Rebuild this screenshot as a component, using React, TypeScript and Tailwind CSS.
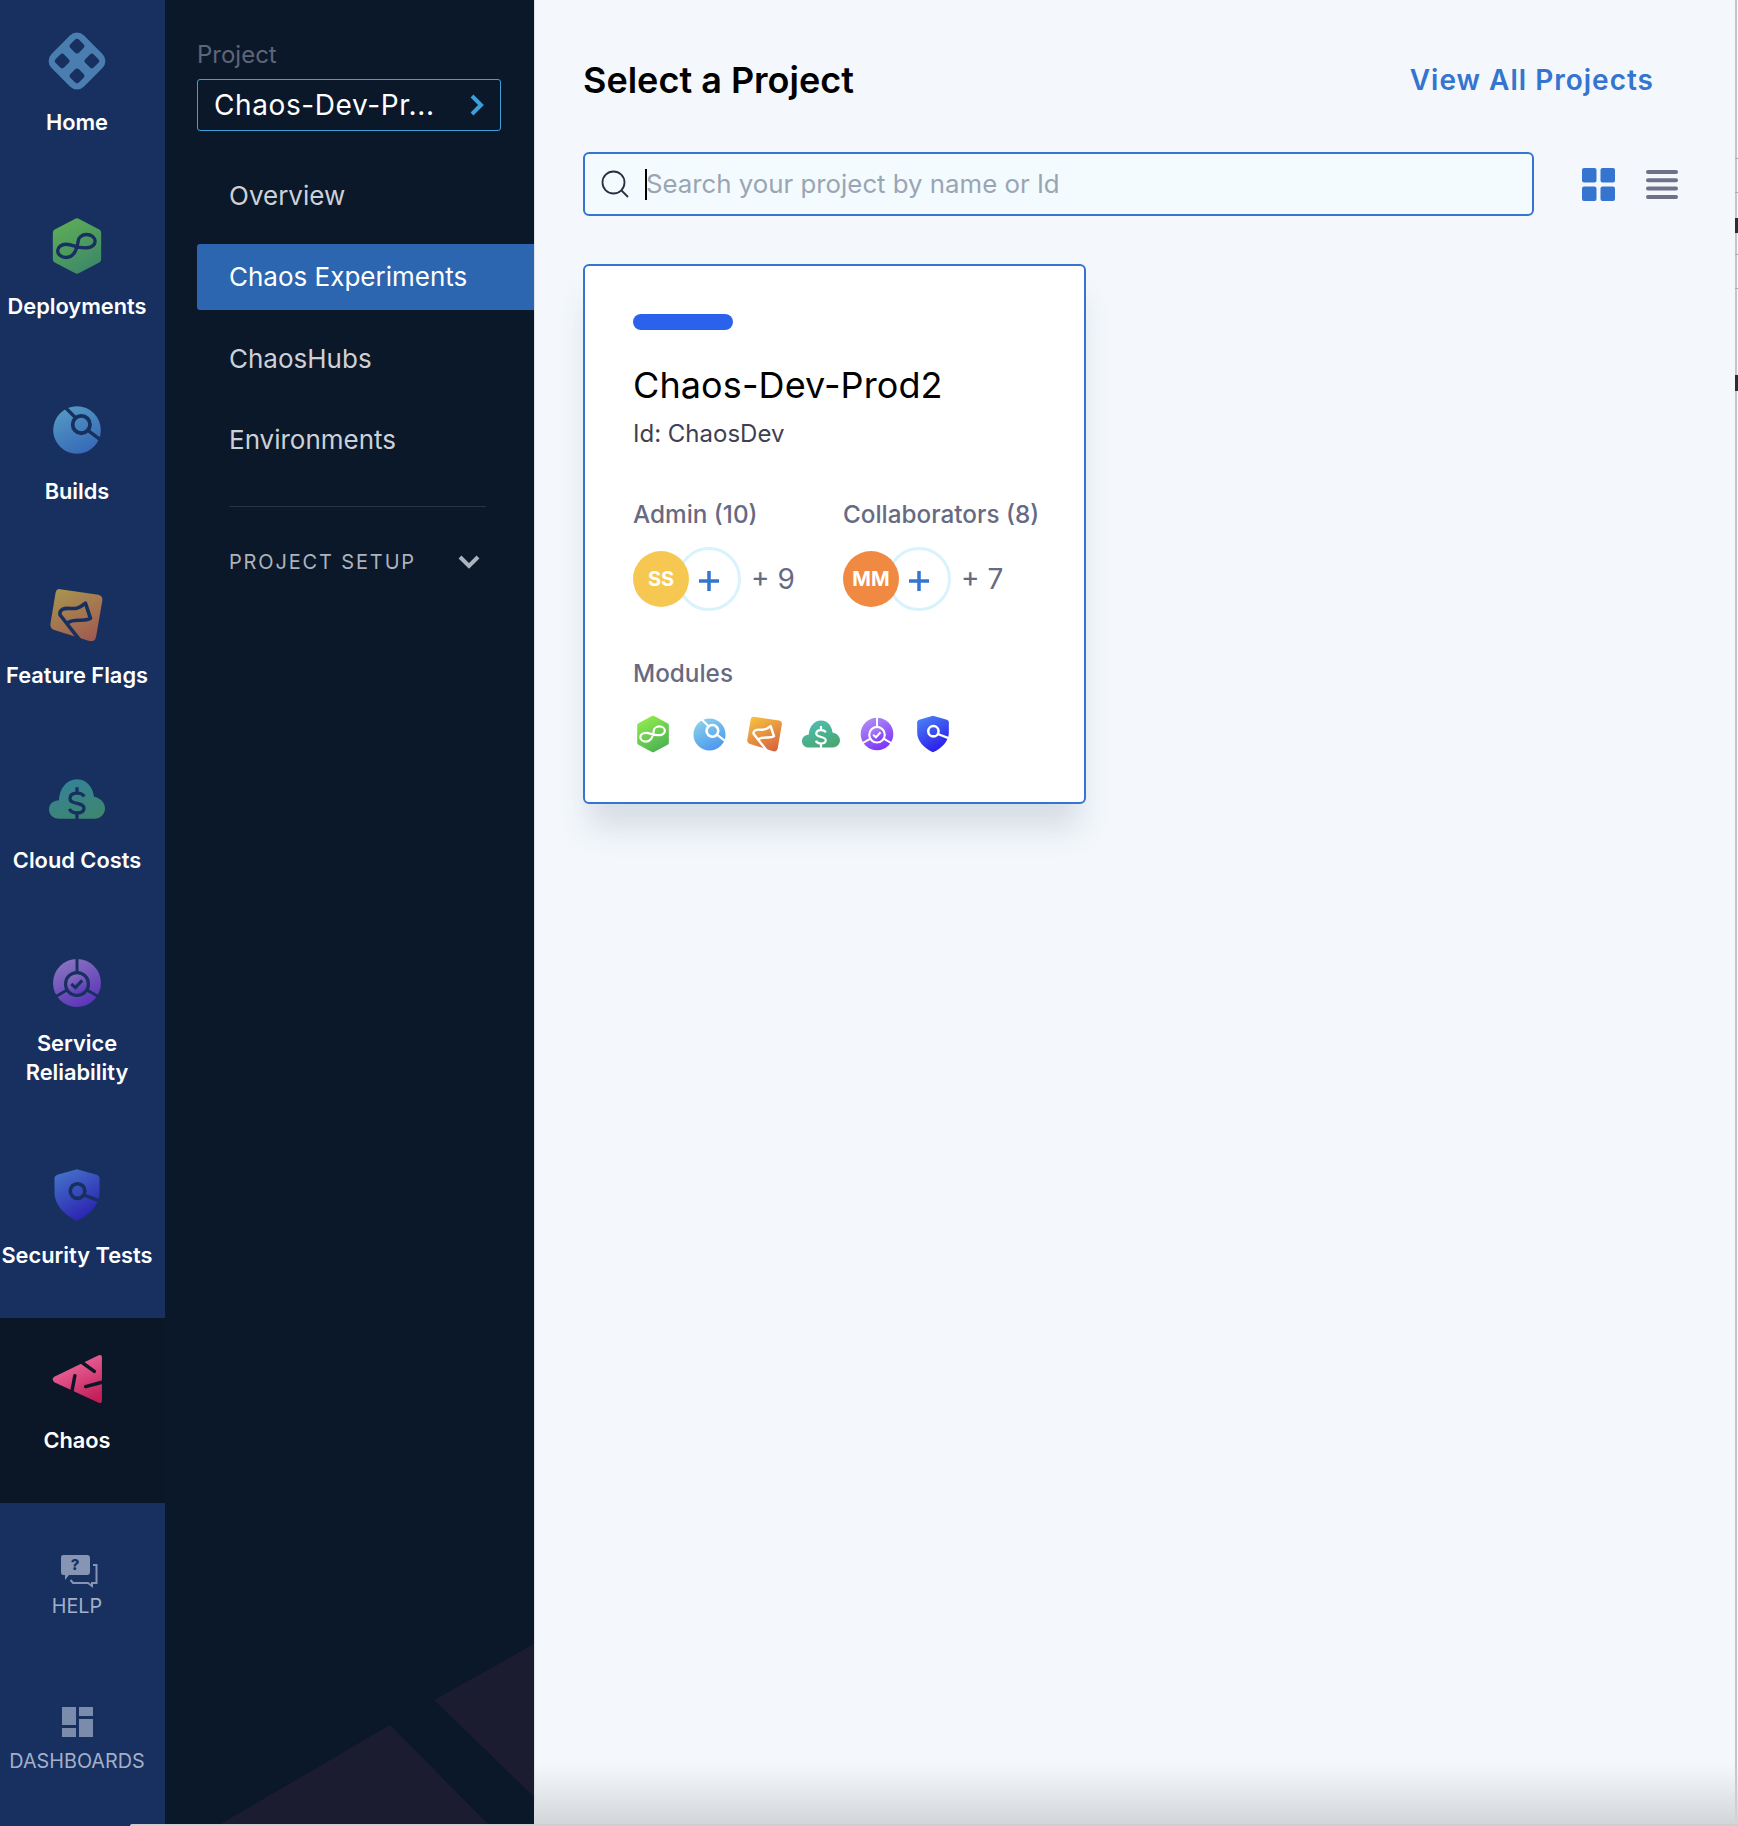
import { ReactNode } from "react";

interface IIcon {
  size: number;
  from: string;
  to: string;
  cut: string;
  id: string;
}

function Gradient({ id, from, to }: { id: string; from: string; to: string }) {
  return (
    <defs>
      <linearGradient id={id} x1="0.2" y1="0" x2="0.7" y2="1">
        <stop offset="0%" stopColor={from} />
        <stop offset="100%" stopColor={to} />
      </linearGradient>
    </defs>
  );
}

function DeployIcon({ size, from, to, cut, id }: IIcon) {
  return (
    <svg width={size} height={size} viewBox="0 0 48 48">
      <Gradient id={id} from={from} to={to} />
      <path
        d="M24 4 L41 13 V35 L24 44 L7 35 V13 Z"
        fill={`url(#${id})`}
        stroke={`url(#${id})`}
        strokeWidth="6"
        strokeLinejoin="round"
      />
      <path
        d="M15 22.500 C21 22.500 23 26 32 25.500 A7 5.500 0 1 0 25 20 C24.500 25 22 33.500 15 33.500 A7 5.500 0 1 1 15 22.500"
        fill="none"
        stroke={cut}
        strokeWidth="2.800"
        strokeLinejoin="round"
      />
    </svg>
  );
}

function BuildsIcon({ size, from, to, cut, id }: IIcon) {
  return (
    <svg width={size} height={size} viewBox="0 0 48 48">
      <Gradient id={id} from={from} to={to} />
      <circle cx="24" cy="24" r="22" fill={`url(#${id})`} />
      <path d="M13 3 L22 12 M35 25 L47 34" stroke={cut} strokeWidth="3" />
      <circle cx="28" cy="19" r="8" fill="none" stroke={cut} strokeWidth="3.500" />
    </svg>
  );
}

function FlagIcon({ size, from, to, cut, id }: IIcon) {
  return (
    <svg width={size} height={size} viewBox="0 0 48 48">
      <Gradient id={id} from={from} to={to} />
      <path
        d="M9 1 L43 6 Q47 7 46.500 11 L41 43 Q40 48 35 47 L3 37 Q-0.500 35 0.500 31 L5 4 Q6 0.500 9 1 Z"
        fill={`url(#${id})`}
      />
      <path
        d="M27 47 L9 24 Q8 21 11 19 C17 16 22 22 31.500 13.500 L36 27 C29 31 24 26 15 31"
        fill="none"
        stroke={cut}
        strokeWidth="3.200"
        strokeLinejoin="round"
      />
    </svg>
  );
}

function CloudIcon({ size, from, to, cut, id }: IIcon) {
  return (
    <svg width={size} height={size} viewBox="0 0 48 48">
      <Gradient id={id} from={from} to={to} />
      <path
        d="M9 41 C3 41 0 37 0 33 C0 28 4 25 8.500 25 C9 15 15 7 24 7 C33 7 38 15 38.500 22 C44 23 48 27 48 32 C48 37 44 41 39 41 Z"
        fill={`url(#${id})`}
      />
      <path
        d="M30 22 C29 19.500 27 19 24 19 C20.500 19 18 20.500 18 23.500 C18 29.500 30 26 30 32 C30 35 27.500 36 24 36 C20.500 36 18.500 35 17.500 32.500 M24 14 V19 M24 36 V42"
        fill="none"
        stroke={cut}
        strokeWidth="2.800"
      />
    </svg>
  );
}

function ServiceIcon({ size, from, to, cut, id }: IIcon) {
  return (
    <svg width={size} height={size} viewBox="0 0 48 48">
      <Gradient id={id} from={from} to={to} />
      <circle cx="24" cy="24" r="23" fill={`url(#${id})`} />
      <path d="M24 0 V13 M14 31 L2 38 M34 31 L46 38" stroke={cut} strokeWidth="2.800" />
      <circle cx="24" cy="25" r="11" fill={`url(#${id})`} stroke={cut} strokeWidth="3" />
      <path
        d="M18.500 25 L22.500 28.500 L29 21.500"
        fill="none"
        stroke={cut}
        strokeWidth="3"
      />
    </svg>
  );
}

function ShieldIcon({ size, from, to, cut, id }: IIcon) {
  return (
    <svg width={size} height={size} viewBox="0 0 48 48">
      <Gradient id={id} from={from} to={to} />
      <path
        d="M24 1 L41.500 6 Q44 7 44 9 V22 C44 33 35 42 24 47 C13 42 4 33 4 22 V9 Q4 7 6.500 6 Z"
        fill={`url(#${id})`}
      />
      <circle cx="24.500" cy="20.500" r="6.500" fill="none" stroke={cut} strokeWidth="3.200" />
      <path d="M30 24 L44.500 29.500" stroke={cut} strokeWidth="3" />
    </svg>
  );
}

function ChaosIcon({ size, from, to, cut, id }: IIcon) {
  return (
    <svg width={size} height={size} viewBox="0 0 48 48">
      <Gradient id={id} from={from} to={to} />
      <path
        d="M44 2 Q47 1 47 4 V44 Q47 47 44 46 L3 27 Q0 24 3 22 Z"
        fill={`url(#${id})`}
      />
      <path
        d="M29 9 L40 17 M47 27 L32 31 M22 21 L19 37"
        fill="none"
        stroke={cut}
        strokeWidth="3.200"
        strokeLinecap="round"
      />
    </svg>
  );
}

function HomeIcon() {
  return (
    <svg width="60" height="60" viewBox="0 0 60 60">
      <g transform="rotate(45 30 30)">
        <rect x="7" y="7" width="46" height="46" rx="10" fill="#4a7db0" />
        <rect x="13.500" y="13.500" width="12" height="12" rx="3" fill="#17305f" />
        <rect x="34.500" y="13.500" width="12" height="12" rx="3" fill="#17305f" />
        <rect x="13.500" y="34.500" width="12" height="12" rx="3" fill="#17305f" />
        <rect x="34.500" y="34.500" width="12" height="12" rx="3" fill="#17305f" />
      </g>
    </svg>
  );
}

function HelpIcon() {
  return (
    <svg width="38" height="34" viewBox="0 0 38 34">
      <path
        d="M3 1 H27 Q30 1 30 4 V18 Q30 21 27 21 H9 L5 26 V21 H3 Q1 21 1 18 V4 Q1 1 3 1 Z"
        fill="#8595b3"
      />
      <text
        x="15"
        y="16"
        textAnchor="middle"
        fontSize="15"
        fontWeight="800"
        fill="#17305f"
        fontFamily="Inter, sans-serif"
      >
        ?
      </text>
      <path
        d="M33 11 H36.500 V29 H32 V32 L28 29 H13 L10.500 26"
        fill="none"
        stroke="#8595b3"
        strokeWidth="2"
      />
    </svg>
  );
}

function DashIcon() {
  return (
    <svg width="32" height="32" viewBox="0 0 32 32">
      <rect x="1" y="1" width="14" height="18" fill="#7a8bab" />
      <rect x="18" y="1" width="14" height="9" fill="#7a8bab" />
      <rect x="1" y="22" width="14" height="9" fill="#7a8bab" />
      <rect x="18" y="13" width="14" height="18" fill="#7a8bab" />
    </svg>
  );
}

function RailItem({
  icon,
  label,
  active,
  tall,
}: {
  icon: ReactNode;
  label: ReactNode;
  active?: boolean;
  tall?: boolean;
}) {
  return (
    <div
      className={`flex flex-col items-center pr-[11px] ${
        tall ? "h-[211px] pt-[32px]" : "h-[184.500px] pt-[33px]"
      } ${active ? "bg-[#0b1626]" : ""}`}
    >
      <div className="h-[56px] flex items-center justify-center">{icon}</div>
      <div className="mt-[18.500px] text-center text-[21.800px] leading-[29px] font-semibold text-white">
        {label}
      </div>
    </div>
  );
}

function NavItem({ label, active }: { label: string; active?: boolean }) {
  return (
    <div
      className={`h-[66px] mb-[15.500px] pl-[32px] flex items-center text-[26px] rounded-l-[3px] ${
        active ? "bg-[#2c66b0] text-white" : "text-[#cdd0d6]"
      }`}
    >
      {label}
    </div>
  );
}

function People({
  title,
  initials,
  colour,
  more,
}: {
  title: string;
  initials: string;
  colour: string;
  more: string;
}) {
  return (
    <div className="flex flex-col">
      <div className="text-[24.300px] leading-[30px] font-medium text-[#666a82] whitespace-nowrap">
        {title}
      </div>
      <div className="flex items-center mt-[18px] h-[64px]">
        <div className="relative w-[108px] h-[64px]">
          <div className="absolute left-[44px] top-0 w-[64px] h-[64px] rounded-full border-[3px] border-[#d9f3fd] flex items-center justify-center bg-white">
            <svg className="mt-[3px]" width="20" height="20" viewBox="0 0 20 20">
              <path d="M10 0 V20 M0 10 H20" stroke="#3574cf" strokeWidth="3.500" />
            </svg>
          </div>
          <div
            className={`absolute left-0 top-[4px] w-[56px] h-[56px] rounded-full flex items-center justify-center text-white text-[20px] font-bold ${colour}`}
          >
            {initials}
          </div>
        </div>
        <div className="ml-[10px] text-[28px] text-[#666a82] whitespace-pre">{more}</div>
      </div>
    </div>
  );
}

function ModuleSlot({ children }: { children: ReactNode }) {
  return <div className="flex w-[56px] items-center justify-center">{children}</div>;
}

export default function App() {
  return (
    <div
      className="relative flex w-[1738px] h-[1826px] overflow-hidden bg-[#f4f8fc]"
      style={{ fontFamily: "Inter, sans-serif" }}
    >
      {/* Module rail */}
      <div className="flex flex-col w-[165px] shrink-0 bg-[#17305f]">
        <RailItem icon={<HomeIcon />} label="Home" />
        <RailItem
          label="Deployments"
          icon={<DeployIcon size={58} id="r1" from="#5cab57" to="#3f8a68" cut="#17305f" />}
        />
        <RailItem
          label="Builds"
          icon={<BuildsIcon size={52} id="r2" from="#559ac2" to="#3568b8" cut="#17305f" />}
        />
        <RailItem
          label="Feature Flags"
          icon={<FlagIcon size={54} id="r3" from="#a8934f" to="#a15c52" cut="#17305f" />}
        />
        <RailItem
          label="Cloud Costs"
          icon={<CloudIcon size={56} id="r4" from="#338399" to="#3e8570" cut="#17305f" />}
        />
        <RailItem
          tall
          label={
            <>
              Service
              <br />
              Reliability
            </>
          }
          icon={<ServiceIcon size={50} id="r5" from="#8a76bf" to="#5a33b8" cut="#17305f" />}
        />
        <RailItem
          label="Security Tests"
          icon={<ShieldIcon size={54} id="r6" from="#4472c8" to="#2a1fb0" cut="#17305f" />}
        />
        <RailItem
          active
          label="Chaos"
          icon={<ChaosIcon size={52} id="r7" from="#f173a6" to="#c21f58" cut="#0b1626" />}
        />
        <div className="flex flex-col items-center pr-[11px] pt-[51px] h-[151px]">
          <div className="h-[34px] pl-[4px]">
            <HelpIcon />
          </div>
          <div className="mt-[6px] text-[19.800px] leading-[24px] text-[#a3afc8]">HELP</div>
        </div>
        <div className="flex flex-col items-center pr-[11px] pt-[52px]">
          <DashIcon />
          <div className="mt-[11px] text-[19.800px] leading-[24px] text-[#a3afc8]">DASHBOARDS</div>
        </div>
      </div>

      {/* Project panel */}
      <div className="relative flex flex-col w-[369px] shrink-0 bg-[#0b1829] pl-[32px]">
        <svg
          className="absolute left-0 top-0"
          width="369"
          height="1826"
          viewBox="0 0 369 1826"
        >
          <path d="M52 1826 L225 1725 L325 1826 Z" fill="#1b1c30" />
          <path d="M369 1644 L269 1700 L369 1797 Z" fill="#1b1c30" />
        </svg>
        <div className="relative flex flex-col">
          <div className="mt-[40px] text-[24px] leading-[30px] text-[#5f6579]">Project</div>
          <div className="mt-[9px] flex items-center justify-between w-[304px] h-[52px] rounded-[3px] border border-[#3f9fd8] pl-[16px] pr-[16px]">
            <span className="text-[28px] text-white tracking-[0.600px]">Chaos-Dev-Pr...</span>
            <svg width="14" height="22" viewBox="0 0 14 22">
              <path d="M2 2 L11 11 L2 20" fill="none" stroke="#3b9fdc" strokeWidth="4" />
            </svg>
          </div>
          <div className="mt-[31px]">
            <NavItem label="Overview" />
            <NavItem active label="Chaos Experiments" />
            <NavItem label="ChaosHubs" />
            <NavItem label="Environments" />
          </div>
          <div className="ml-[32px] mt-[18px] w-[257px] h-px bg-[#283445]" />
          <div className="ml-[32px] mt-[42px] w-[251px] flex items-center justify-between">
            <span className="text-[20px] leading-[26px] text-[#aeb2bc] tracking-[1.850px]">
              PROJECT SETUP
            </span>
            <svg width="22" height="14" viewBox="0 0 22 14">
              <path d="M2 2 L11 11 L20 2" fill="none" stroke="#aeb2bc" strokeWidth="4" />
            </svg>
          </div>
        </div>
      </div>

      {/* Project picker */}
      <div className="flex flex-col flex-1 pl-[48px] border-l border-[#dfe3e8]">
        <div className="mt-[58px] h-[44px] w-[1071px] flex items-center justify-between">
          <div className="text-[36px] font-semibold text-black">Select a Project</div>
          <div className="text-[28px] font-semibold text-[#3574cf] tracking-[1px]">
            View All Projects
          </div>
        </div>
        <div className="mt-[50px] flex items-center">
          <div className="flex items-center w-[951px] h-[64px] rounded-[6px] border-2 border-[#3574cf] bg-[#f3fbff] pl-[16px]">
            <svg width="28" height="28" viewBox="0 0 28 28">
              <circle cx="12.500" cy="12.500" r="11" fill="none" stroke="#2b3040" strokeWidth="1.800" />
              <path d="M20.500 20.500 L27 27" stroke="#2b3040" strokeWidth="1.800" />
            </svg>
            <div className="ml-[16px] w-[2px] h-[31px] bg-black" />
            <div className="-ml-[1px] text-[25.800px] text-[#9aa5b3]">
              Search your project by name or Id
            </div>
          </div>
          <svg className="ml-[48px]" width="33" height="33" viewBox="0 0 33 33">
            <rect x="0" y="0" width="14.500" height="14.500" rx="2" fill="#3574cf" />
            <rect x="18.500" y="0" width="14.500" height="14.500" rx="2" fill="#3574cf" />
            <rect x="0" y="18.500" width="14.500" height="14.500" rx="2" fill="#3574cf" />
            <rect x="18.500" y="18.500" width="14.500" height="14.500" rx="2" fill="#3574cf" />
          </svg>
          <svg className="ml-[31px]" width="32" height="29" viewBox="0 0 32 29">
            <rect x="0" y="0" width="32" height="4" rx="2" fill="#6f7188" />
            <rect x="0" y="8.300" width="32" height="4" rx="2" fill="#6f7188" />
            <rect x="0" y="16.600" width="32" height="4" rx="2" fill="#6f7188" />
            <rect x="0" y="25" width="32" height="4" rx="2" fill="#6f7188" />
          </svg>
        </div>

        <div className="mt-[48px] flex flex-col w-[503px] h-[540px] rounded-[6px] border-2 border-[#3574cf] bg-white pl-[48px] pt-[48px] shadow-[0_30px_30px_-6px_rgba(50,70,100,0.15)]">
          <div className="w-[100px] h-[16px] rounded-full bg-[#2b62ec]" />
          <div className="mt-[32px] text-[36px] leading-[46px] text-black tracking-[0.100px]">
            Chaos-Dev-Prod2
          </div>
          <div className="mt-[11px] text-[24px] leading-[30px] text-[#3d4152]">Id: ChaosDev</div>
          <div className="mt-[50px] flex">
            <div className="w-[210px]">
              <People title="Admin (10)" initials="SS" colour="bg-[#f6c852]" more="+ 9" />
            </div>
            <People title="Collaborators (8)" initials="MM" colour="bg-[#f08a42]" more="+ 7" />
          </div>
          <div className="mt-[47px] text-[24.300px] leading-[30px] font-medium text-[#666a82]">
            Modules
          </div>
          <div className="mt-[26px] -ml-[8px] flex items-center h-[40px]">
            <ModuleSlot>
              <DeployIcon size={38} id="c1" from="#8eea4e" to="#4eb453" cut="#ffffff" />
            </ModuleSlot>
            <ModuleSlot>
              <BuildsIcon size={35} id="c2" from="#8dd3e9" to="#4a96f0" cut="#ffffff" />
            </ModuleSlot>
            <ModuleSlot>
              <FlagIcon size={36} id="c3" from="#f5c040" to="#d8663f" cut="#ffffff" />
            </ModuleSlot>
            <ModuleSlot>
              <CloudIcon size={38} id="c4" from="#4dbfb2" to="#49a772" cut="#ffffff" />
            </ModuleSlot>
            <ModuleSlot>
              <ServiceIcon size={34} id="c5" from="#b28ff5" to="#7a33f6" cut="#ffffff" />
            </ModuleSlot>
            <ModuleSlot>
              <ShieldIcon size={38} id="c6" from="#4a80f6" to="#2a17e8" cut="#ffffff" />
            </ModuleSlot>
          </div>
        </div>
      </div>

      {/* Window edge: what peeks out from behind the capture */}
      <div className="absolute right-0 top-0 bottom-0 w-[3px] bg-[#f4f8fc] border-l-2 border-[#c3c6c9]">
        <div className="absolute left-[-2px] top-[158px] w-[3px] h-px bg-[#a9acb0]" />
        <div className="absolute left-[-2px] top-[192px] w-[3px] h-px bg-[#a9acb0]" />
        <div className="absolute left-[-2px] top-[218px] w-[3px] h-[15px] bg-[#2a2d33]" />
        <div className="absolute left-[-2px] top-[254px] w-[3px] h-px bg-[#a9acb0]" />
        <div className="absolute left-[-2px] top-[288px] w-[3px] h-px bg-[#a9acb0]" />
        <div className="absolute left-[-2px] top-[375px] w-[3px] h-[16px] bg-[#2a2d33]" />
      </div>
      <div className="absolute left-[534px] right-0 bottom-[2px] h-[60px] bg-gradient-to-b from-transparent to-[#d3d6d9]" />
      <div className="absolute left-[130px] right-0 bottom-0 h-[2px] rounded-tl-[6px] bg-[#cfcfd1]" />
    </div>
  );
}
